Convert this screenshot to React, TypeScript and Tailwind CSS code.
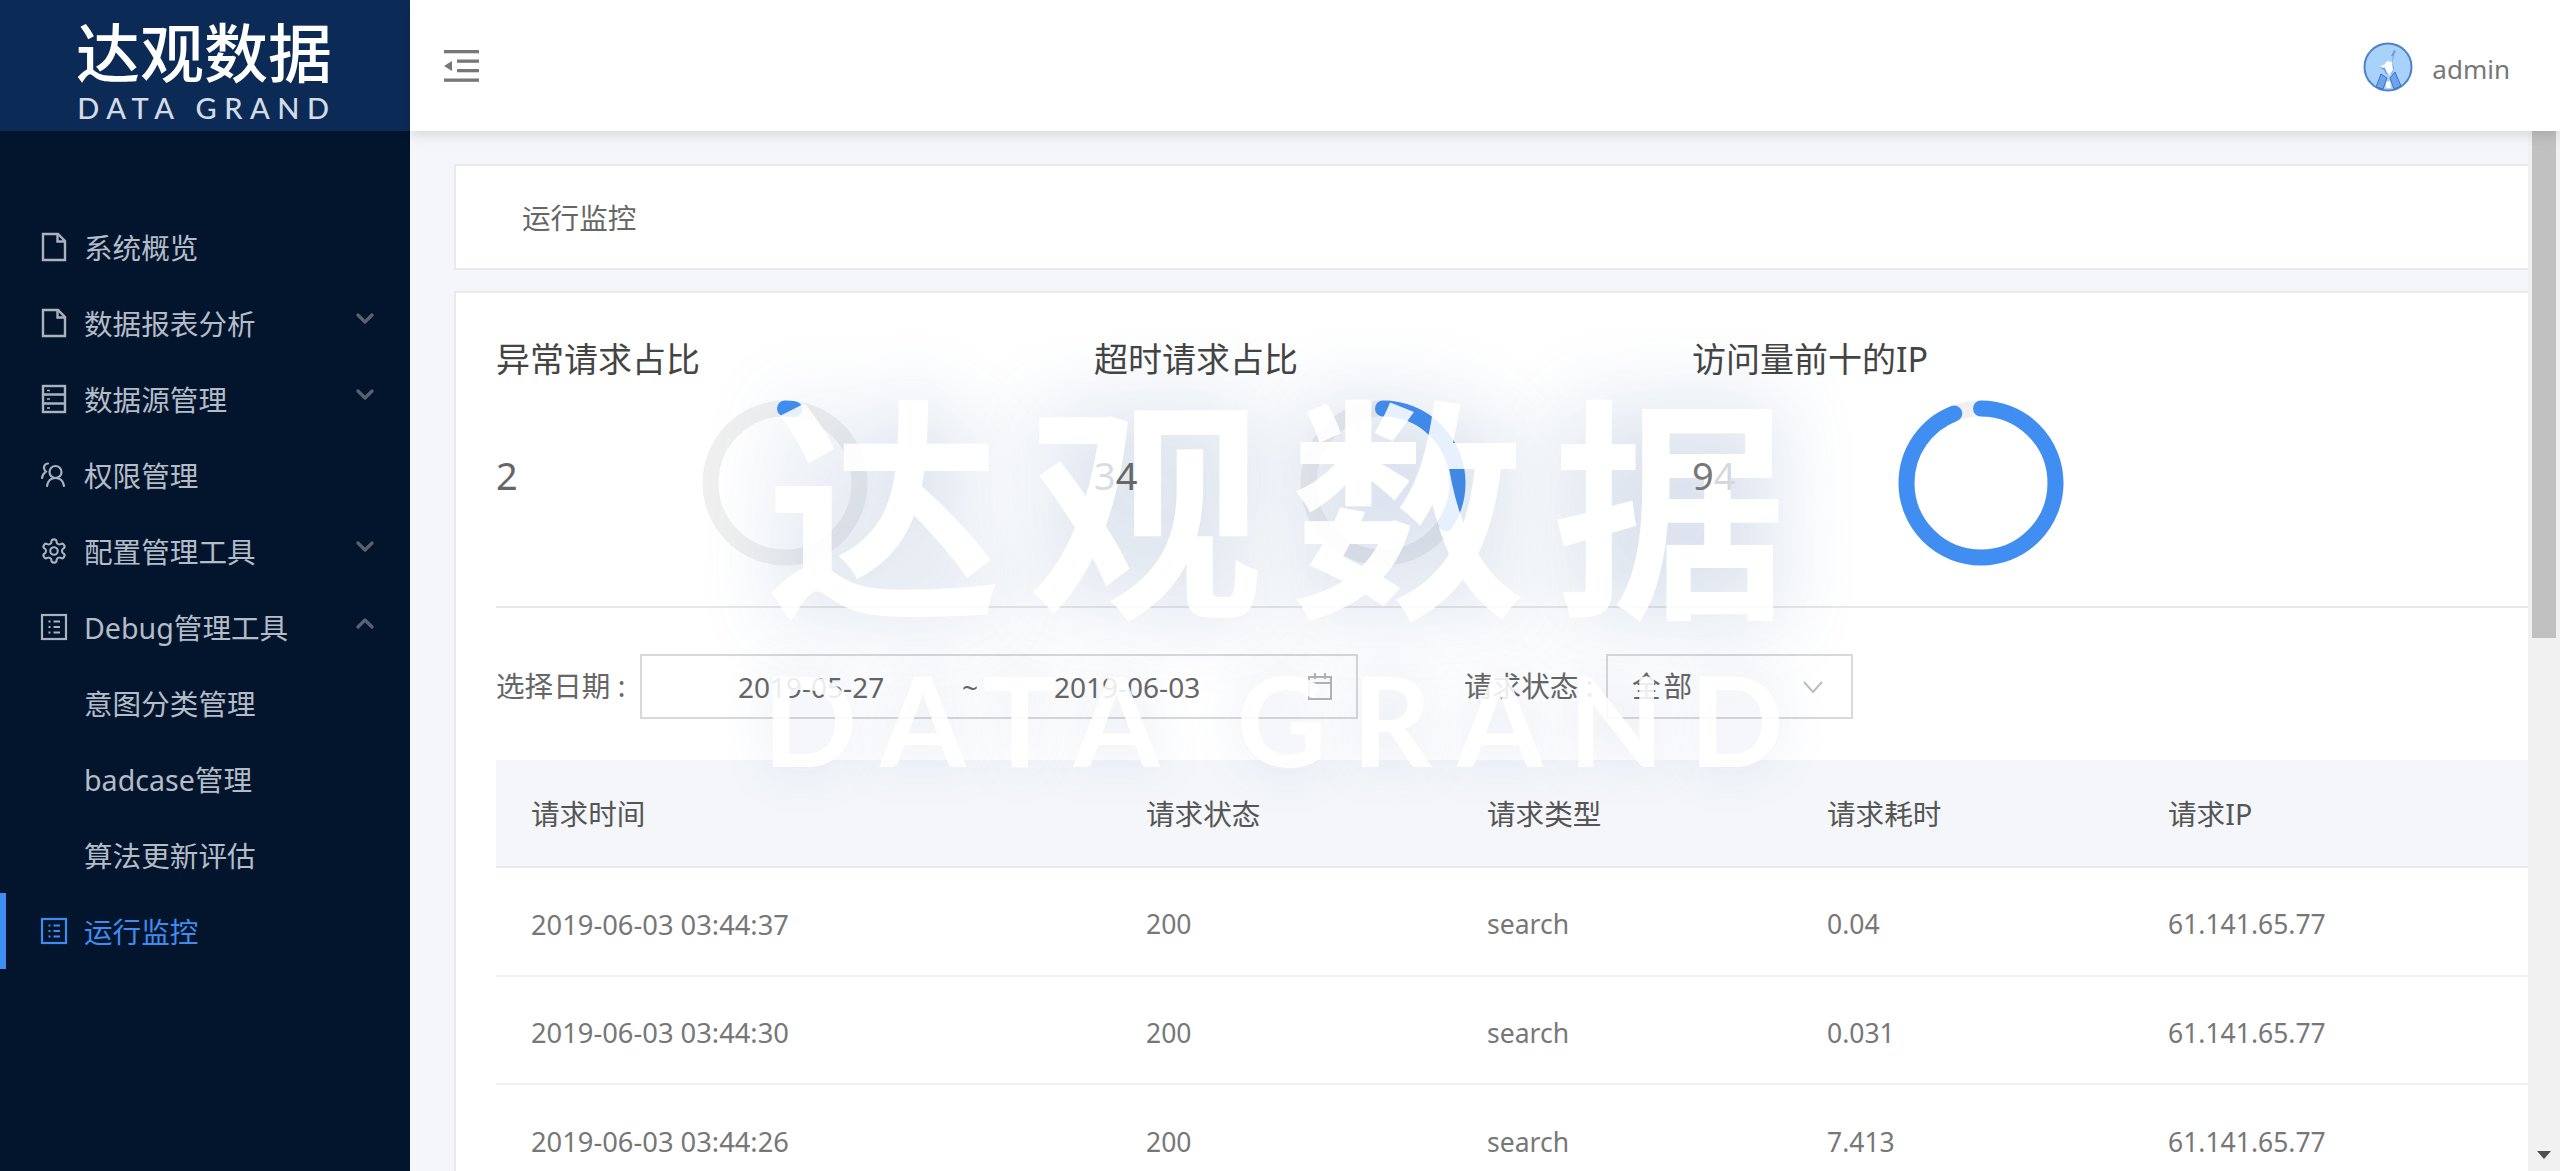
import React from "react";

const Doc = () => (
  <svg width="26" height="30" viewBox="0 0 26 30" fill="none" stroke="currentColor" strokeWidth="2.4">
    <path d="M2 2h15l7 7v19H2z" />
    <path d="M16.5 2v7.5H24" />
  </svg>
);
const Rows = () => (
  <svg width="26" height="30" viewBox="0 0 26 30" fill="none" stroke="currentColor" strokeWidth="2.4">
    <rect x="2" y="2" width="22" height="26" />
    <path d="M2 10.5h22M2 19.5h22" />
    <path d="M6 6.5h3M6 15h3M6 24h3" strokeWidth="1.6" />
  </svg>
);
const Team = () => (
  <svg width="26" height="26" viewBox="0 0 26 26" fill="none" stroke="currentColor" strokeWidth="2.2" strokeLinecap="round">
    <circle cx="14.5" cy="10" r="6" />
    <path d="M6 24c.8-5 4-8 8.500-8s7.700 3 8.500 8" />
    <path d="M7 1.500c-2.500.3-4 2.200-4 4.500 0 1.500.7 2.700 1.800 3.600C2.800 11 1.500 13.300 1 16" />
  </svg>
);
const Gear = () => (
  <svg width="28" height="30" viewBox="0 0 24 24" fill="none" stroke="currentColor" strokeWidth="1.8" strokeLinejoin="round">
    <path d="M12.220 2h-.44a2 2 0 0 0-2 2v.18a2 2 0 0 1-1 1.730l-.43.250a2 2 0 0 1-2 0l-.15-.080a2 2 0 0 0-2.730.730l-.22.380a2 2 0 0 0 .730 2.730l.15.100a2 2 0 0 1 1 1.720v.510a2 2 0 0 1-1 1.740l-.15.090a2 2 0 0 0-.730 2.730l.22.380a2 2 0 0 0 2.730.730l.15-.080a2 2 0 0 1 2 0l.43.250a2 2 0 0 1 1 1.730V20a2 2 0 0 0 2 2h.44a2 2 0 0 0 2-2v-.18a2 2 0 0 1 1-1.730l.43-.250a2 2 0 0 1 2 0l.15.080a2 2 0 0 0 2.730-.730l.22-.390a2 2 0 0 0-.730-2.730l-.15-.080a2 2 0 0 1-1-1.740v-.500a2 2 0 0 1 1-1.740l.15-.090a2 2 0 0 0 .730-2.730l-.22-.380a2 2 0 0 0-2.730-.730l-.15.080a2 2 0 0 1-2 0l-.43-.250a2 2 0 0 1-1-1.730V4a2 2 0 0 0-2-2z" />
    <circle cx="12" cy="12" r="3.200" />
  </svg>
);
const Profile = () => (
  <svg width="28" height="28" viewBox="0 0 28 28" fill="none" stroke="currentColor" strokeWidth="2.2">
    <rect x="2" y="2" width="24" height="24" />
    <path d="M13.500 8.500H20M13.500 14H20M13.500 19.500H20" strokeWidth="1.800" />
    <path d="M8.500 8.500h2M8.500 14h2M8.500 19.500h2" strokeWidth="1.800" />
  </svg>
);
const Chevron = ({ up }: { up?: boolean }) => (
  <svg width="18" height="12" viewBox="0 0 18 12" fill="none" stroke="#59636f" strokeWidth="3.200" strokeLinecap="round" strokeLinejoin="round">
    <path d={up ? "M2 10l7-7 7 7" : "M2 2l7 7 7-7"} />
  </svg>
);

const menu = [
  { icon: <Doc />, label: "系统概览" },
  { icon: <Doc />, label: "数据报表分析", chev: "down" },
  { icon: <Rows />, label: "数据源管理", chev: "down" },
  { icon: <Team />, label: "权限管理" },
  { icon: <Gear />, label: "配置管理工具", chev: "down" },
  { icon: <Profile />, label: "Debug管理工具", chev: "up" },
  { label: "意图分类管理" },
  { label: "badcase管理" },
  { label: "算法更新评估" },
  { icon: <Profile />, label: "运行监控", active: true },
];

const Ring = ({ pct }: { pct: number }) => {
  const r = 74.500;
  const c = 2 * Math.PI * r;
  return (
    <svg width="166" height="166" viewBox="0 0 166 166" className="block">
      <circle cx="83" cy="83" r={r} fill="none" stroke="#f0f0f0" strokeWidth="16" />
      <circle
        cx="83"
        cy="83"
        r={r}
        fill="none"
        stroke="#418ef2"
        strokeWidth="16"
        strokeLinecap="round"
        strokeDasharray={`${(c * pct) / 100} ${c}`}
        transform="rotate(-90 83 83)"
      />
    </svg>
  );
};

const stats = [
  { title: "异常请求占比", value: <span className="text-[#666]">2</span>, pct: 2 },
  {
    title: "超时请求占比",
    value: (
      <>
        <span className="text-[#d9dde3]">3</span>
        <span className="text-[#666]">4</span>
      </>
    ),
    pct: 34,
  },
  {
    title: "访问量前十的IP",
    value: (
      <>
        <span className="text-[#777]">9</span>
        <span className="text-[#d5d9df]">4</span>
      </>
    ),
    pct: 94,
  },
];

const rows = [
  ["2019-06-03 03:44:37", "200", "search", "0.04", "61.141.65.77"],
  ["2019-06-03 03:44:30", "200", "search", "0.031", "61.141.65.77"],
  ["2019-06-03 03:44:26", "200", "search", "7.413", "61.141.65.77"],
];
const head = ["请求时间", "请求状态", "请求类型", "请求耗时", "请求IP"];
const cols = "grid grid-cols-[615px_341px_340px_341px_1fr] items-center";

export default function App() {
  return (
    <div className="relative flex h-[1171px] w-[2560px] overflow-hidden bg-[#f4f6fa] font-['Noto_Sans','Noto_Sans_CJK_SC',sans-serif]">
      {/* sidebar */}
      <aside className="flex w-[410px] shrink-0 flex-col bg-[#03152c]">
        <div className="flex h-[131px] flex-col items-center bg-[#0b2a55] pt-[16px] pr-[2px]">
          <div className="text-[64px] leading-[74px] font-medium text-white">达观数据</div>
          <div className="mt-[1px] pl-[6px] font-['Lato',sans-serif] text-[29px] leading-[34px] font-medium tracking-[0.26em] text-[#d3dbe6]">DATA GRAND</div>
        </div>
        <nav className="flex flex-col pt-[78px]">
          {menu.map((m) => (
            <div
              key={m.label}
              className={`flex h-[76px] items-center border-l-[6px] pr-[36px] text-[28.6px] ${
                m.active ? "border-[#418ef2] text-[#3f8cf0]" : "border-transparent text-[#b4bcc8]"
              }`}
            >
              <span className="flex w-[78px] shrink-0 justify-center pl-[17px] text-[#aab2bd]">
                <span className={`flex ${m.active ? "text-[#3f8cf0]" : ""}`}>{m.icon}</span>
              </span>
              <span className="flex-1 pt-[2px]">{m.label}</span>
              {m.chev && (
                <span className="mb-[8px]">
                  <Chevron up={m.chev === "up"} />
                </span>
              )}
            </div>
          ))}
        </nav>
      </aside>

      {/* right column */}
      <div className="flex min-w-0 flex-1 flex-col">
        <header className="relative z-10 flex h-[131px] shrink-0 items-center justify-between bg-white pr-[50px] pl-[34px] shadow-[0_4px_12px_rgba(0,0,0,0.12)]">
          <svg width="36" height="32" viewBox="0 0 36 32" fill="#777">
            <rect x="0" y="0" width="35" height="3.300" />
            <rect x="13" y="9.500" width="22" height="3.300" />
            <rect x="13" y="19" width="22" height="3.300" />
            <rect x="0" y="28.500" width="35" height="3.300" />
            <path d="M8 11v10l-8-5z" />
          </svg>
          <div className="flex items-center gap-[19px] pt-[2px]">
            <svg width="50" height="50" viewBox="0 0 50 50">
              <circle cx="25" cy="25" r="23.500" fill="#a9d2fa" stroke="#4f83c8" strokeWidth="2" />
              <path d="M31 8l-3 6 3 1-2 6-6 1-7 3 5 3 2 4h6l2-6-2-6 1-5 3-6z" fill="#4f83d8" opacity="0.7" />
              <path d="M24 19l5 1 1 8-3 5-3-2-2-5-6-1 6-3z" fill="#fff" />
              <path d="M18 32l-5 13 7 2 4-11zM32 30l6 14-7 3-4-11z" fill="#6fa3ea" stroke="#3a70d0" strokeWidth="1" />
              <path d="M23 40l4-1 1 7h-5z" fill="#fff" />
            </svg>
            <span className="pt-[5px] text-[26px] text-[#777]">admin</span>
          </div>
        </header>

        <div className="flex min-h-0 flex-1">
          <main className="min-w-0 flex-1 overflow-hidden pt-[33px] pl-[44px]">
            <div className="flex h-[106px] items-center border-2 border-r-0 border-[#e8eaf0] bg-white pt-[2px] pl-[66px] text-[28.6px] text-[#666]">
              运行监控
            </div>
            <div className="mt-[21px] border-2 border-r-0 border-b-0 border-[#e8eaf0] bg-white pt-[41px] pl-[40px]">
              <div className="flex">
                {stats.map((s) => (
                  <div key={s.title} className="w-[598px] shrink-0">
                    <div className="text-[34px] leading-[50px] text-[#444]">{s.title}</div>
                    <div className="mt-[16px] flex">
                      <div className="relative z-30 w-[206px] pt-[45px] text-[38px] leading-[60px]">{s.value}</div>
                      <Ring pct={s.pct} />
                    </div>
                  </div>
                ))}
              </div>
              <div className="mt-[40px] h-[2px] bg-[#e8e8e8]" />
              <div className="mt-[46px] flex h-[65px] items-center text-[28px] text-[#666]">
                <span className="w-[144px] text-[28.6px]">选择日期 :</span>
                <div className="relative flex h-[65px] w-[718px] items-center border-2 border-[#d9d9d9] pl-[96px] text-[#666]">
                  <span className="w-[224px]">2019-05-27</span>
                  <span className="w-[92px]">~</span>
                  <span>2019-06-03</span>
                  <svg className="absolute right-[23px] top-[16px]" width="26" height="28" viewBox="0 0 26 28" fill="none" stroke="#b5b5b5" strokeWidth="2">
                    <path d="M2 5h22v22H2zM2 11h22M8 1v6M18 1v6" />
                  </svg>
                </div>
                <span className="ml-[106px] w-[142px] text-[28.6px]">请求状态 :</span>
                <div className="flex h-[65px] w-[247px] items-center justify-between border-2 border-[#d9d9d9] pr-[28px] pl-[24px] text-[28.6px] tracking-[0.1em]">
                  <span>全部</span>
                  <svg width="20" height="12" viewBox="0 0 20 12" fill="none" stroke="#bdbdbd" strokeWidth="2">
                    <path d="M1 1l9 10 9-10" />
                  </svg>
                </div>
              </div>
              <div className={`${cols} mt-[41px] h-[108px] border-b-2 border-[#e8eaf0] bg-[#f4f6fa] pt-[2px] pl-[35px] text-[28.6px] text-[#555]`}>
                {head.map((h) => (
                  <span key={h}>{h}</span>
                ))}
              </div>
              {rows.map((r) => (
                <div key={r[0]} className={`${cols} h-[108.6px] border-b-2 border-[#eef0f4] pt-[8px] pl-[35px] text-[26.5px] text-[#777]`}>
                  {r.map((c, i) => (
                    <span key={i} className={i === 0 ? "text-[27.3px]" : ""}>
                      {c}
                    </span>
                  ))}
                </div>
              ))}
            </div>
          </main>
          {/* scroll bar drawing */}
          <div className="flex w-[32px] shrink-0 flex-col items-center justify-between bg-[#f1f1f1] pb-[12px]">
            <div className="h-[507px] w-[24px] bg-[#c1c1c1]" />
            <svg width="14" height="8" viewBox="0 0 14 8" fill="#505050">
              <path d="M0 0h14l-7 8z" />
            </svg>
          </div>
        </div>
      </div>

      {/* watermark */}
      <div className="pointer-events-none absolute top-[374px] left-[762px] z-20 flex w-[1030px] flex-col items-center text-white opacity-[0.88]">
        <div className="pl-[27px] text-[235px] leading-[270px] font-bold tracking-[27px] whitespace-nowrap [text-shadow:0_0_80px_rgba(70,110,170,0.3)]">达观数据</div>
        <div className="mt-[10px] pl-[18px] font-['Lato',sans-serif] text-[124px] leading-[130px] font-bold tracking-[0.205em] whitespace-nowrap [text-shadow:0_0_50px_rgba(70,110,170,0.18)]">DATA GRAND</div>
      </div>
    </div>
  );
}
